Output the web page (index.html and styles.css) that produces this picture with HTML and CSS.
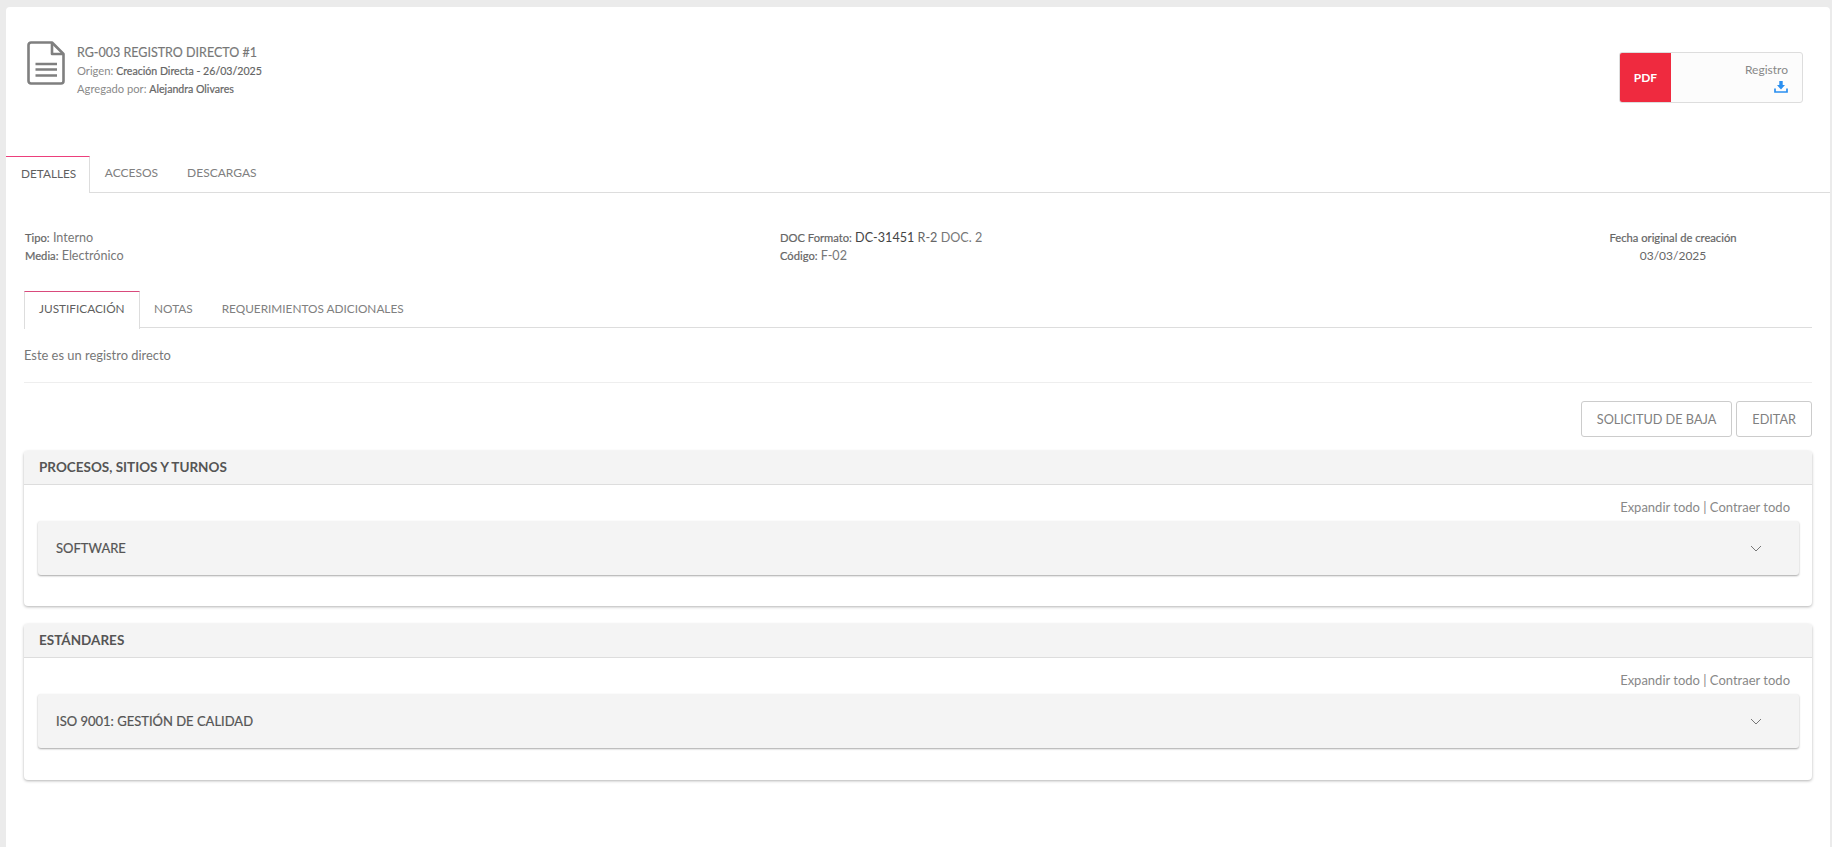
FILE: index.html
```html
<!DOCTYPE html>
<html lang="es">
<head>
<meta charset="utf-8">
<title>RG-003 Registro directo</title>
<link rel="stylesheet" href="styles.css">
</head>
<body>
<main class="sheet">
  <header class="doc-head">
    <div class="doc-id">
      <svg class="doc-icon" width="38" height="44" viewBox="0 0 38 44" fill="none">
        <path d="M4 1.500H25L36.500 13V40a2.500 2.500 0 0 1-2.500 2.500H4A2.500 2.500 0 0 1 1.500 40V4A2.500 2.500 0 0 1 4 1.500Z" stroke="#7f7f7f" stroke-width="2.600" stroke-linejoin="round"/>
        <path d="M25 2V13H36" stroke="#7f7f7f" stroke-width="2.600" stroke-linejoin="round"/>
        <path d="M8.500 23H30M8.500 28.500H30M8.500 34.500H30" stroke="#7f7f7f" stroke-width="2.600"/>
      </svg>
      <div class="doc-text">
        <div class="doc-title">RG-003 REGISTRO DIRECTO #1</div>
        <div class="doc-line">Origen: <b>Creación Directa - 26/03/2025</b></div>
        <div class="doc-line">Agregado por: <b>Alejandra Olivares</b></div>
      </div>
    </div>
    <div class="pdf-box">
      <div class="pdf-tag">PDF</div>
      <div class="pdf-body">
        <span class="pdf-name">Registro</span>
        <svg width="14" height="12" viewBox="0 0 14 12" fill="none">
          <path d="M5.300 0H8.700V4H11L7 8.500L3 4H5.300Z" fill="#2a8ff0"/>
          <path d="M1 7.500V11H13V7.500" stroke="#2a8ff0" stroke-width="1.700"/>
        </svg>
      </div>
    </div>
  </header>

  <nav class="tabs main-tabs">
    <a class="tab active">DETALLES</a>
    <a class="tab">ACCESOS</a>
    <a class="tab">DESCARGAS</a>
  </nav>

  <section class="content">
    <div class="info-row">
      <div class="info-col">
        <div><b>Tipo:</b> Interno</div>
        <div><b>Media:</b> Electrónico</div>
      </div>
      <div class="info-col">
        <div><b>DOC Formato:</b> <strong class="code">DC-31451</strong> <em class="rev">R-2</em> DOC. 2</div>
        <div><b>Código:</b> F-02</div>
      </div>
      <div class="info-col date-col">
        <div><b>Fecha original de creación</b></div>
        <div class="date">03/03/2025</div>
      </div>
    </div>

    <nav class="tabs sub-tabs">
      <a class="tab active">JUSTIFICACIÓN</a>
      <a class="tab">NOTAS</a>
      <a class="tab">REQUERIMIENTOS ADICIONALES</a>
    </nav>
    <p class="justify">Este es un registro directo</p>

    <div class="actions">
      <button class="btn">SOLICITUD DE BAJA</button>
      <button class="btn">EDITAR</button>
    </div>

    <section class="panel">
      <h2 class="panel-head">PROCESOS, SITIOS Y TURNOS</h2>
      <div class="panel-body">
        <div class="toggle-links">Expandir todo | Contraer todo</div>
        <div class="row-card">
          <span>SOFTWARE</span>
          <svg class="chev" width="12" height="7" viewBox="0 0 12 7" fill="none"><path d="M1 1L6 6L11 1" stroke="#777" stroke-width="1"/></svg>
        </div>
      </div>
    </section>

    <section class="panel">
      <h2 class="panel-head">ESTÁNDARES</h2>
      <div class="panel-body">
        <div class="toggle-links">Expandir todo | Contraer todo</div>
        <div class="row-card">
          <span>ISO 9001: GESTIÓN DE CALIDAD</span>
          <svg class="chev" width="12" height="7" viewBox="0 0 12 7" fill="none"><path d="M1 1L6 6L11 1" stroke="#777" stroke-width="1"/></svg>
        </div>
      </div>
    </section>
  </section>
</main>
</body>
</html>
```
FILE: styles.css
```css
* { box-sizing: border-box; }
html, body { height: 100%; }
body {
  margin: 0;
  background: #ebebeb;
  padding: 7px 2px 0 6px;
  font-family: Lato, "Open Sans", sans-serif;
  color: #777;
  overflow: hidden;
}
.sheet {
  background: #fff;
  height: 840px;
  border-radius: 4px 4px 0 0;
}
.doc-head {
  height: 149px;
  display: flex;
  justify-content: space-between;
  align-items: flex-start;
  padding: 34px 27px 0 21px;
}
.doc-id { display: flex; gap: 12px; }
.doc-text { padding-top: 3px; }
.doc-title { font-size: 12.500px; line-height: 18px; color: #777; -webkit-text-stroke: .15px #777; }
.doc-line { font-size: 11.200px; line-height: 18px; color: #8a8a8a; }
.doc-line b { font-size: 10.600px; font-weight: 400; color: #666; -webkit-text-stroke: .2px #666; }
.pdf-box {
  width: 184px;
  height: 51px;
  margin-top: 11px;
  display: flex;
  border: 1px solid #ddd;
  border-radius: 3px;
  background: #fcfcfc;
  overflow: hidden;
}
.pdf-tag {
  width: 51px;
  background: #ef2a3f;
  color: #fff;
  font-size: 12px;
  font-weight: 700;
  display: flex;
  align-items: center;
  justify-content: center;
}
.pdf-body {
  flex: 1;
  display: flex;
  flex-direction: column;
  align-items: flex-end;
  padding: 10px 14px 0 0;
  gap: 4px;
}
.pdf-name { font-size: 12px; line-height: 14px; color: #888; }
.tabs { display: flex; border-bottom: 1px solid #ddd; }
.tab {
  font-size: 11.800px;
  color: #808080;
  padding: 0 14.500px;
  line-height: 36px;
  height: 36px;
}
.tab.active {
  color: #5f5f5f;
  background: #fff;
  border: 1px solid #ddd;
  border-top: 1px solid #ec3f7c;
  border-bottom: 0;
  border-left: 0;
  height: 38px;
  margin-bottom: -1px;
}
.main-tabs { height: 37px; }
.main-tabs .tab { line-height: 34px; font-size: 12px; }
.main-tabs .tab.active { padding: 0 13px 0 15px; height: 37px; font-size: 11.800px; }
.content { padding: 0 18px; }
.info-row {
  display: grid;
  grid-template-columns: 755px 1fr 278px;
  padding: 36px 0 0 1px;
  height: 98px;
  font-size: 12.600px;
  line-height: 18px;
}
.info-col b { font-weight: 400; font-size: 11.200px; color: #666; -webkit-text-stroke: .2px #666; }
.code { font-weight: 400; font-size: 12.600px; color: #444; }
.rev { font-style: normal; color: #666; }
.date-col { text-align: center; }
.date { color: #666; font-size: 12px; }
.sub-tabs { height: 37px; }
.sub-tabs .tab.active { border-left: 1px solid #ddd; border-top-color: #d94a7c; padding: 0 14px; line-height: 34px; }
.justify {
  margin: 0;
  height: 55px;
  padding: 18px 0 0;
  font-size: 12.900px;
  line-height: 18px;
  border-bottom: 1px solid #eee;
}
.actions {
  display: flex;
  justify-content: flex-end;
  gap: 4px;
  padding-top: 18px;
  height: 68px;
}
.btn {
  height: 36px;
  padding: 0 15px;
  background: #fff;
  border: 1px solid #ccc;
  border-radius: 3px;
  font: inherit;
  font-size: 12.700px;
  color: #808080;
}
.panel {
  height: 155px;
  margin-bottom: 18px;
  border-radius: 4px;
  background: #fff;
  box-shadow: 0 1px 3px rgba(0,0,0,.3);
}
.panel + .panel { height: 156px; }
.panel-head {
  margin: 0;
  height: 34px;
  padding: 0 15px;
  line-height: 32px;
  font-size: 13.500px;
  font-weight: 700;
  color: #555;
  background: #f4f4f4;
  border-bottom: 1px solid #ddd;
  border-radius: 4px 4px 0 0;
}
.panel-body { padding: 0 13px 0 14px; }
.toggle-links {
  height: 36px;
  padding: 14px 9px 0 0;
  text-align: right;
  font-size: 13px;
  line-height: 16px;
  color: #888;
}
.row-card {
  height: 54px;
  display: flex;
  align-items: center;
  justify-content: space-between;
  padding: 0 37.500px 0 18px;
  background: #f4f4f4;
  border-radius: 3px;
  box-shadow: 0 1px 2px rgba(0,0,0,.35);
  font-size: 13px;
  color: #555;
}
.row-card span { -webkit-text-stroke: .2px #555; }
```
